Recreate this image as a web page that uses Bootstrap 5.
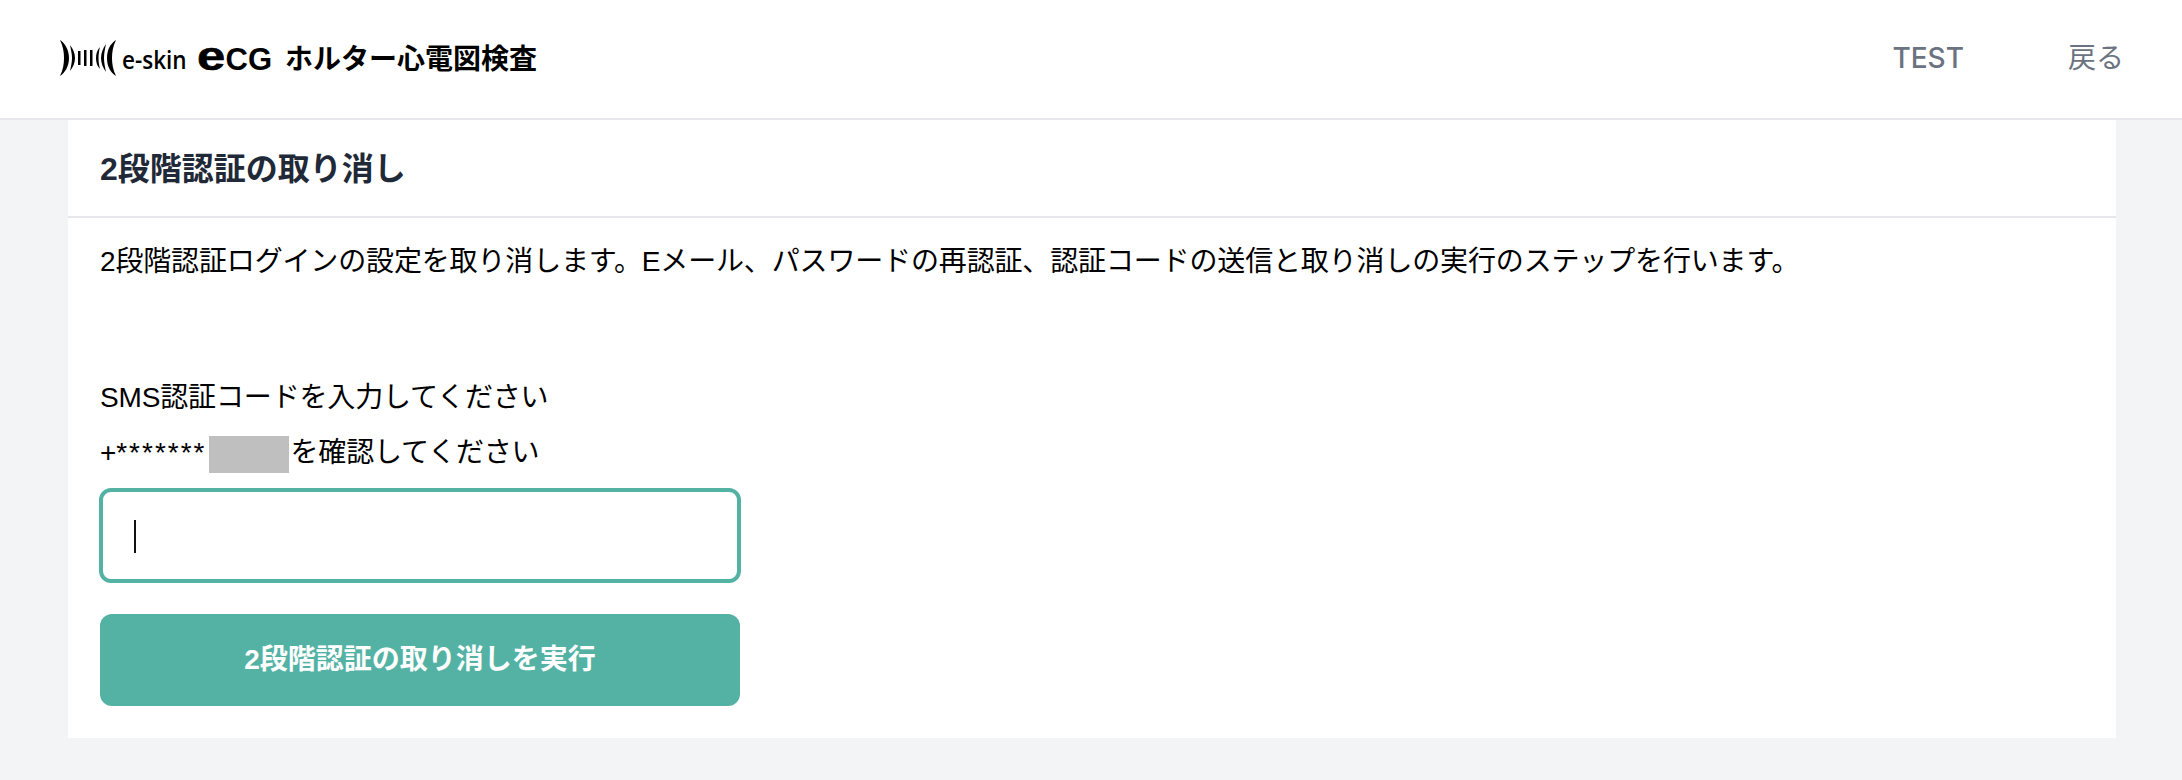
<!DOCTYPE html>
<html lang="ja">
<head>
<meta charset="utf-8">
<title>2段階認証の取り消し</title>
<link rel="stylesheet" href="https://cdn.jsdelivr.net/npm/bootstrap@5.3.0/dist/css/bootstrap.min.css">
<style>
html, body { height: 100%; }
body { background: #f3f4f6; font-family: "Liberation Sans", "Noto Sans CJK JP", sans-serif; font-size: 28px; color: #000; line-height: 42px; }
.top-bar { height: 120px; background: #fff; border-bottom: 2px solid #e5e7eb; padding: 0 58px 2px 60px; }
.logo-wrap { gap: 6px; color: #000; }
.logo-skin { font-family: "Open Sans", sans-serif; font-weight: 600; font-size: 25px; line-height: 1; width: 65px; display: inline-block; transform: scaleX(.9); transform-origin: left center; white-space: nowrap; padding-top: 2px; }
.logo-ecg { font-family: "Liberation Sans", sans-serif; font-weight: 700; line-height: 1; width: 75px; margin-left: 4px; align-items: baseline; white-space: nowrap; padding-bottom: 4px; }
.ecg-e { font-size: 40px; line-height: 1; width: 29px; display: inline-block; transform: scaleX(1.27); transform-origin: left center; -webkit-text-stroke: .6px #000; }
.ecg-cg { font-size: 31px; line-height: 1; }
.logo-jp { font-family: "Noto Sans CJK JP", sans-serif; font-weight: 700; font-size: 28px; line-height: 1; margin-left: 7px; padding-bottom: 2px; }
.nav-links { gap: 104px; }
.nav-item-link { color: #6b7280; text-decoration: none; font-family: Inter, "Noto Sans CJK JP", sans-serif; font-size: 28px; line-height: 42px; }
.nav-item-link.fw-test { font-weight: 500; }
.sheet { margin: 0 66px 0 68px; background: #fff; }
.sheet-head { height: 98px; padding: 0 32px; border-bottom: 2px solid #e5e7eb; color: #1f2937; font-size: 32px; font-weight: 700; line-height: 98px; }
.sheet-body { padding: 23px 32px 32px; }
.lead-text { margin: 0 0 94px; letter-spacing: -.15px; }
.step-line { margin: 0 0 14px; letter-spacing: -.15px; }
.step-first { margin-bottom: 13px; }
.stars { letter-spacing: 2px; }
.masked { display: inline-block; width: 80px; height: 37px; background: #bfbfbf; vertical-align: middle; margin: 0 1px 0 3px; }
.code-field { position: relative; width: 642px; margin: 0 0 31px -1px; }
.code-input { display: block; width: 100%; height: 95px; border: 4px solid #54b2a4; border-radius: 12px; background: #fff; outline: 0; caret-color: transparent; padding: 0 32px; font-size: 28px; }
.caret-mark { position: absolute; left: 35px; top: 32px; width: 2px; height: 33px; background: #111; }
.submit-btn { display: block; width: 640px; height: 92px; background: #54b2a4; border: 0; border-radius: 12px; color: #fff; font-size: 28px; font-weight: 700; }
.submit-btn:hover, .submit-btn:active { background: #54b2a4; color: #fff; }
</style>
</head>
<body>
<nav class="top-bar d-flex align-items-center justify-content-between">
  <div class="logo-wrap d-flex align-items-center">
    <svg width="56" height="36" viewBox="0 0 56 36" fill="#000" aria-hidden="true">
      <path d="M0 0 C5 3 9 10 9 18 C9 26 5 33 0 36 C3 30 4 24 4 18 C4 12 3 6 0 0Z"/>
      <path d="M10 5 C13 9 15 13 15 18 C15 23 13 27 10 31 C11 26 12 22 12 18 C12 14 11 10 10 5Z"/>
      <rect x="18" y="11" width="2.5" height="14"/><rect x="24" y="10" width="2.5" height="16"/><rect x="30" y="10" width="2.5" height="16"/>
      <path d="M40 7 C37 10 36 14 36 18 C36 22 37 26 40 29 C39 25 38.500 22 38.500 18 C38.500 14 39 11 40 7Z"/>
      <path d="M46 4 C43 8 41 13 41 18 C41 23 43 28 46 32 C45 27 44 23 44 18 C44 13 45 9 46 4Z"/>
      <path d="M56 0 C50 4 47 10 47 18 C47 26 50 32 56 36 C53 30 52 24 52 18 C52 12 53 6 56 0Z"/>
    </svg>
    <span class="logo-skin">e-skin</span>
    <span class="logo-ecg d-inline-flex"><span class="ecg-e">e</span><span class="ecg-cg">CG</span></span>
    <span class="logo-jp">ホルター心電図検査</span>
  </div>
  <div class="nav-links d-flex align-items-center">
    <a class="nav-item-link fw-test" href="#">TEST</a>
    <a class="nav-item-link" href="#">戻る</a>
  </div>
</nav>
<main class="sheet">
  <div class="sheet-head">2段階認証の取り消し</div>
  <div class="sheet-body">
    <p class="lead-text">2段階認証ログインの設定を取り消します。Eメール、パスワードの再認証、認証コードの送信と取り消しの実行のステップを行います。</p>
    <p class="step-line step-first">SMS認証コードを入力してください</p>
    <p class="step-line">+<span class="stars">*******</span><span class="masked"></span>を確認してください</p>
    <div class="code-field">
      <input class="code-input" type="text" aria-label="認証コード">
      <span class="caret-mark"></span>
    </div>
    <button class="btn submit-btn" type="button">2段階認証の取り消しを実行</button>
  </div>
</main>
<script src="https://cdn.jsdelivr.net/npm/bootstrap@5.3.0/dist/js/bootstrap.bundle.min.js"></script>
</body>
</html>
